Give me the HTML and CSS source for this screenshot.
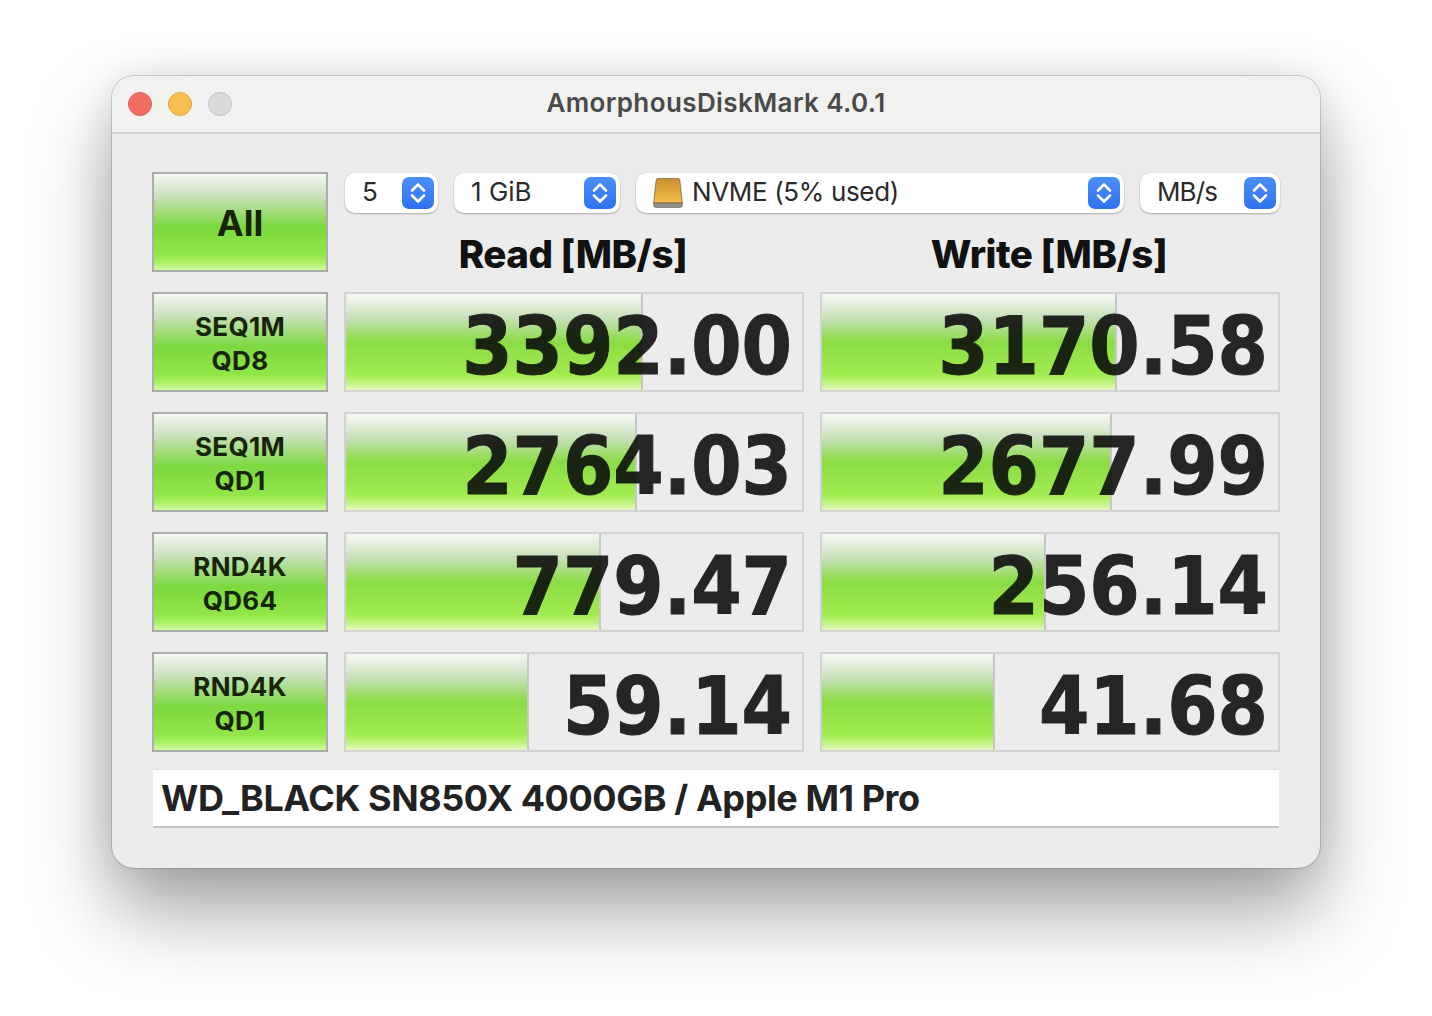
FILE: index.html
```html
<!DOCTYPE html>
<html lang="en">
<head>
    <meta charset="UTF-8">
    <title>AmorphousDiskMark 4.0.1</title>
    <link rel="stylesheet" href="styles.css">
</head>
<body>
    <div class="window">
        <div class="titlebar">
            <div class="lights">
                <span class="light red"></span>
                <span class="light yellow"></span>
                <span class="light gray"></span>
            </div>
            <div class="title">AmorphousDiskMark 4.0.1</div>
        </div>

        <div class="content">
            <div class="board">
                <button class="run run-all">All</button>
                <div class="header">
                    <div class="controls">
                        <div class="select sel-count"><span class="select-text">5</span>
                            <span class="stepper"><svg viewBox="0 0 32 32"><path d="M10 13.5 16 7.5 22 13.5M10 18.5 16 24.5 22 18.5"/></svg></span>
                        </div>
                        <div class="select sel-size"><span class="select-text">1 GiB</span>
                            <span class="stepper"><svg viewBox="0 0 32 32"><path d="M10 13.5 16 7.5 22 13.5M10 18.5 16 24.5 22 18.5"/></svg></span>
                        </div>
                        <div class="select sel-disk">
                            <span class="select-text disk-name">
                                <svg class="disk" viewBox="0 0 30 32">
                                    <defs>
                                        <linearGradient id="diskfill" x1="0" y1="0" x2="0" y2="1">
                                            <stop offset="0" stop-color="#c98f2e"/>
                                            <stop offset="1" stop-color="#f5bd45"/>
                                        </linearGradient>
                                    </defs>
                                    <path d="M5 1.500H25Q26.500 1.500 26.800 3L29.300 26H.7L3.200 3Q3.500 1.500 5 1.500Z" fill="url(#diskfill)" stroke="#7d6a45" stroke-width=".8"/>
                                    <path d="M.7 26H29.300V28.500Q29.300 30.500 27.300 30.500H2.700Q.7 30.500 .7 28.500Z" fill="#8f8f88" stroke="#5f5f5a" stroke-width=".6"/>
                                </svg>
                                NVME (5% used)
                            </span>
                            <span class="stepper"><svg viewBox="0 0 32 32"><path d="M10 13.5 16 7.5 22 13.5M10 18.5 16 24.5 22 18.5"/></svg></span>
                        </div>
                        <div class="select sel-unit"><span class="select-text">MB/s</span>
                            <span class="stepper"><svg viewBox="0 0 32 32"><path d="M10 13.5 16 7.5 22 13.5M10 18.5 16 24.5 22 18.5"/></svg></span>
                        </div>
                    </div>
                    <div class="headings">
                        <div class="heading">Read [MB/s]</div>
                        <div class="heading">Write [MB/s]</div>
                    </div>
                </div>

                <button class="run">SEQ1M<br>QD8</button>
                <div class="meter"><div class="fill" style="width: 297px"></div><span class="value">3392.00</span></div>
                <div class="meter"><div class="fill" style="width: 295px"></div><span class="value">3170.58</span></div>

                <button class="run">SEQ1M<br>QD1</button>
                <div class="meter"><div class="fill" style="width: 291px"></div><span class="value">2764.03</span></div>
                <div class="meter"><div class="fill" style="width: 290px"></div><span class="value">2677.99</span></div>

                <button class="run">RND4K<br>QD64</button>
                <div class="meter"><div class="fill" style="width: 255px"></div><span class="value">779.47</span></div>
                <div class="meter"><div class="fill" style="width: 224px"></div><span class="value">256.14</span></div>

                <button class="run">RND4K<br>QD1</button>
                <div class="meter"><div class="fill" style="width: 183px"></div><span class="value">59.14</span></div>
                <div class="meter"><div class="fill" style="width: 173px"></div><span class="value">41.68</span></div>
            </div>

            <div class="comment">WD_BLACK SN850X 4000GB / Apple M1 Pro</div>
        </div>
    </div>
</body>
</html>
```

FILE: styles.css
```css
* {
    box-sizing: border-box;
}

html, body {
    height: 100%;
    overflow: hidden;
}

body {
    margin: 0;
    padding: 76px 112px 0;
    background: #fff;
    font-family: Inter, "Liberation Sans", sans-serif;
    color: #222;
}

.window {
    height: 792px;
    background: #ececec;
    border-radius: 22px;
    box-shadow: 0 0 0 1px rgba(0,0,0,0.16), 0 44px 80px rgba(0,0,0,0.36), 0 0 40px rgba(0,0,0,0.1);
    overflow: hidden;
}

.titlebar {
    display: flex;
    align-items: center;
    height: 58px;
    padding: 0 16px;
    background: #f1f1ef;
    border-bottom: 2px solid #d0d0ce;
}

.lights {
    display: flex;
    gap: 16px;
    width: 104px;
}

.light {
    width: 24px;
    height: 24px;
    border-radius: 50%;
}

.red {
    background: #f26d60;
    border: 1px solid #dc5f52;
}

.yellow {
    background: #f8bf4e;
    border: 1px solid #e3aa42;
}

.gray {
    background: #d9d9d7;
    border: 1px solid #c2c2c0;
}

.title {
    flex: 1;
    margin-right: 104px;
    padding-bottom: 4px;
    text-align: center;
    font-size: 26px;
    font-weight: 600;
    letter-spacing: 0.4px;
    color: #4a4a4a;
}

.content {
    padding: 38px 40px 0;
}

.board {
    display: grid;
    grid-template-columns: 176px 460px 460px;
    grid-auto-rows: 100px;
    gap: 20px 16px;
}

.run {
    padding: 4px 0 0;
    border: 2px solid #adadad;
    background: linear-gradient(#f5f8f3 0%, #c4dfb6 25%, #7cd93e 55%, #92e749 85%, #a9ef62 91%, #d2f9a0 100%);
    font-family: inherit;
    font-size: 26px;
    font-weight: 700;
    letter-spacing: 0.3px;
    line-height: 34px;
    color: #172409;
}

.run-all {
    padding-top: 2px;
    font-size: 36px;
    letter-spacing: 0;
}

.header {
    grid-column: span 2;
    display: flex;
    flex-direction: column;
}

.controls {
    display: flex;
    flex: none;
    gap: 16px;
    height: 40px;
    margin: 1px 0 0 1px;
}

.select {
    display: flex;
    align-items: center;
    justify-content: space-between;
    padding: 0 4px 0 17px;
    background: #fff;
    border-radius: 10px;
    box-shadow: 0 1px 2px rgba(0,0,0,0.28), 0 0 1px rgba(0,0,0,0.12);
    font-size: 26px;
    color: #2a2a2a;
}

.select-text {
    padding-bottom: 4px;
}

.sel-count {
    width: 93px;
}

.sel-size {
    width: 166px;
}

.sel-disk {
    width: 488px;
    letter-spacing: -0.35px;
}

.sel-unit {
    width: 140px;
    letter-spacing: -0.9px;
}

.disk-name {
    display: flex;
    align-items: center;
    gap: 9px;
}

.disk {
    width: 30px;
    height: 32px;
    margin-top: 4px;
}

.stepper {
    width: 32px;
    height: 32px;
    border-radius: 7px;
    background: linear-gradient(#4b8ffa, #2f72f0);
}

.stepper svg {
    display: block;
    width: 32px;
    height: 32px;
}

.stepper path {
    fill: none;
    stroke: #fff;
    stroke-width: 2.6;
    stroke-linecap: round;
    stroke-linejoin: round;
}

.headings {
    display: grid;
    grid-template-columns: 460px 460px;
    gap: 16px;
    margin: 18px 0 0 -1px;
}

.heading {
    text-align: center;
    font-size: 38.5px;
    font-weight: 800;
    letter-spacing: -0.5px;
    line-height: 46px;
    color: #111;
}

.meter {
    position: relative;
    display: flex;
    align-items: center;
    justify-content: flex-end;
    padding: 8px 10px 0 0;
    background: #ececec;
    border: 2px solid #d2d2d2;
}

.fill {
    position: absolute;
    top: 0;
    bottom: 0;
    left: 0;
    border-right: 2px solid #c6c6c6;
    background: linear-gradient(#f6f8f5 0%, #c6e0b8 25%, #8adc44 50%, #a1ec50 84%, #bdf27c 92%, #e4fbbf 100%);
}

.value {
    position: relative;
    font-family: "DejaVu Sans", sans-serif;
    font-size: 80.5px;
    font-weight: 700;
    font-stretch: condensed;
    line-height: 1;
    color: #0a0a0a;
    opacity: 0.88;
    -webkit-text-stroke: 1px #0a0a0a;
}

.comment {
    height: 59px;
    margin: 17px 1px 0;
    padding-left: 8px;
    background: #fff;
    border-top: 1px solid #e2e2e2;
    border-bottom: 2px solid #c4c4c4;
    font-size: 36px;
    font-weight: 700;
    letter-spacing: -0.42px;
    line-height: 56px;
    color: #222;
}
```
